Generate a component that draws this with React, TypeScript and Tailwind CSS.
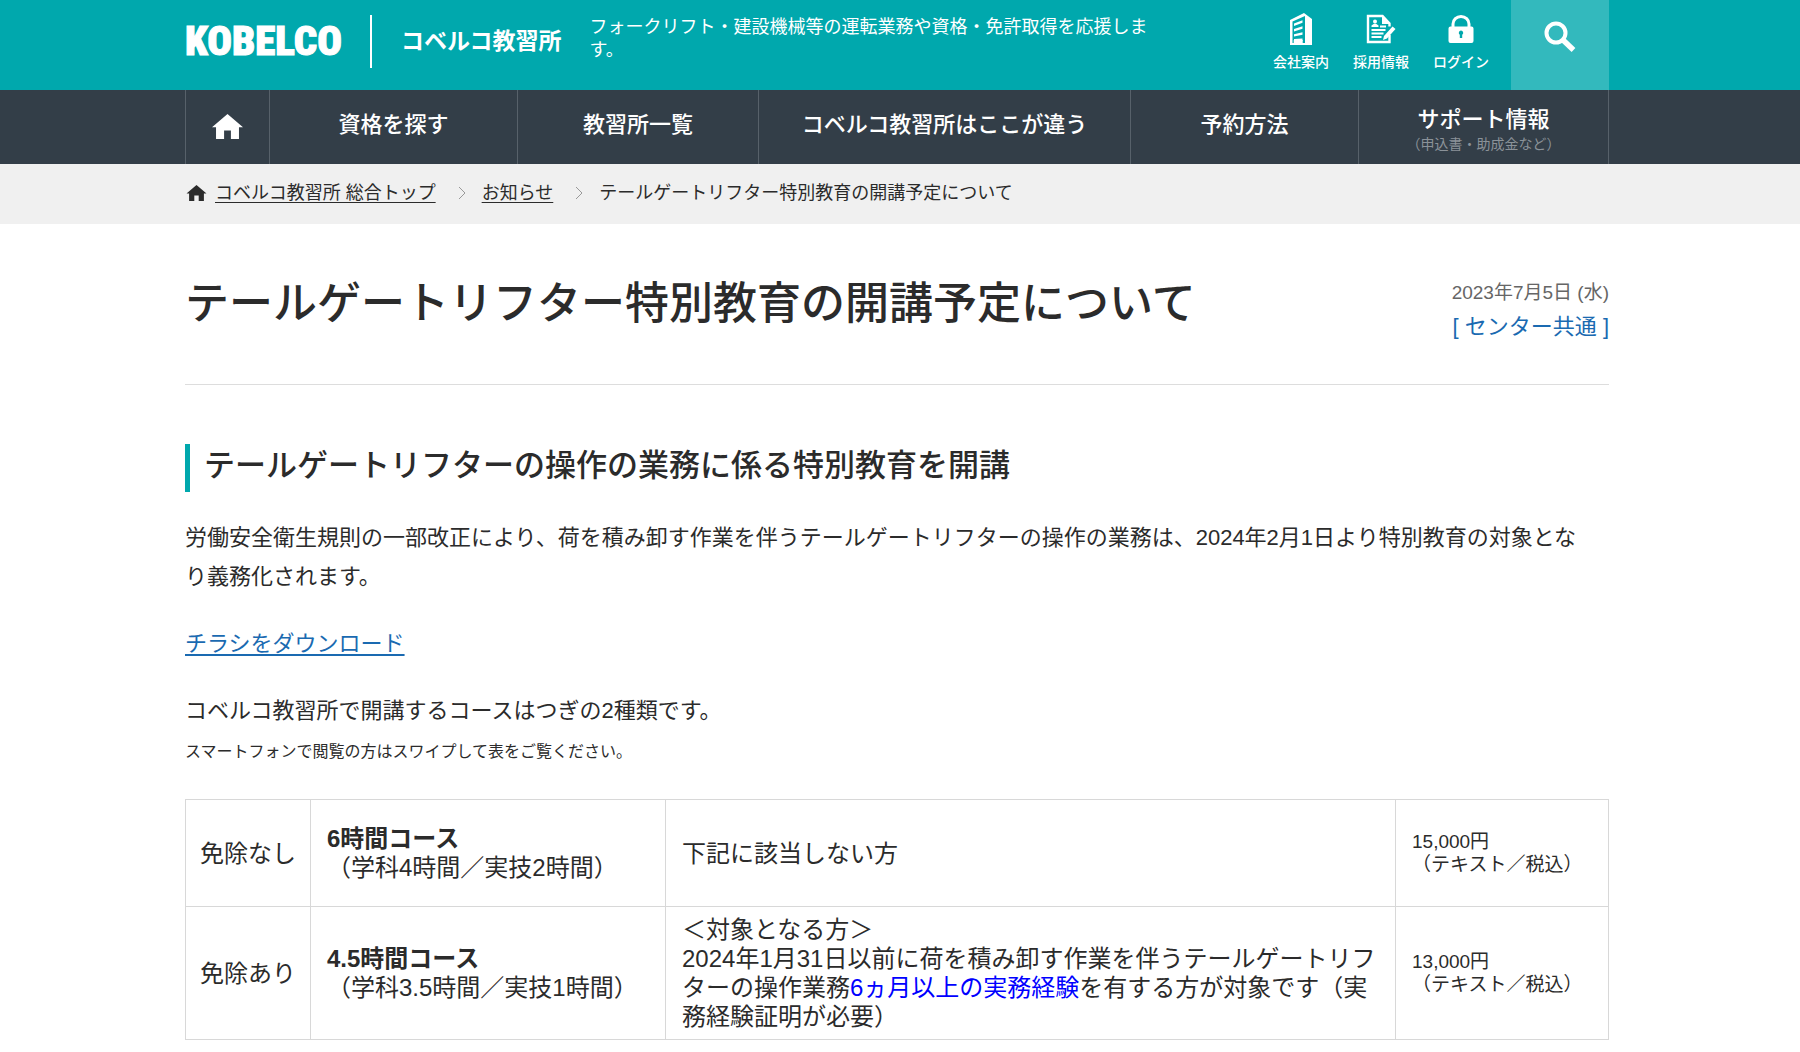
import type { ReactNode } from 'react';

interface INavItem {
  label: string;
  note?: string;
}

interface ICourse {
  exemption: string;
  name: string;
  hours: string;
  target: ReactNode;
  price: string;
}

const navItems: INavItem[] = [
  { label: '資格を探す' },
  { label: '教習所一覧' },
  { label: 'コベルコ教習所はここが違う' },
  { label: '予約方法' },
  { label: 'サポート情報', note: '（申込書・助成金など）' },
];

const courses: ICourse[] = [
  {
    exemption: '免除なし',
    name: '6時間コース',
    hours: '（学科4時間／実技2時間）',
    target: '下記に該当しない方',
    price: '15,000円',
  },
  {
    exemption: '免除あり',
    name: '4.5時間コース',
    hours: '（学科3.5時間／実技1時間）',
    target: (
      <>
        ＜対象となる方＞
        <br />
        2024年1月31日以前に荷を積み卸す作業を伴うテールゲートリフターの操作業務
        <span className="text-[#0000ff]">6ヵ月以上の実務経験</span>
        を有する方が対象です（実務経験証明が必要）
      </>
    ),
    price: '13,000円',
  },
];

function HomeIcon({ className }: { className: string }) {
  return (
    <svg viewBox="2 3 20 16" className={className} fill="currentColor" aria-hidden="true">
      <path d="M12 3l10 8.5h-2.600V19h-5.200v-5.400H9.800V19H4.600v-7.500H2z" />
    </svg>
  );
}

function BuildingIcon() {
  return (
    <svg viewBox="0 0 24 34" className="h-[34px] w-6" fill="currentColor" aria-hidden="true">
      <path fillRule="evenodd" d="M1 8L15 1l8 6v26H1zM3.5 9.600V31h1.200v-3h9v3H16V4z" />
      <path d="M5 11.600l8.500-3.400v2.600L5 14zM5 17l8.500-2.800v2.600L5 19.400zM5 22.200l8.500-2v2.600L5 24.600zM5 27l8.500-.6V29H5z" />
    </svg>
  );
}

function DocumentIcon() {
  return (
    <svg viewBox="0 0 30 30" className="h-[30px] w-[30px]" aria-hidden="true">
      <path
        d="M23.5 21v7H2V2h14.5l7 7.500v3"
        fill="none"
        stroke="currentColor"
        strokeWidth="2.400"
      />
      <path d="M16 2v8h8z" fill="currentColor" />
      <circle cx="9" cy="7.500" r="2" fill="currentColor" />
      <path d="M5.500 13v-1.500L8 9.800h2l2.500 1.700V13z" fill="currentColor" />
      <path
        d="M14 12.500h6M5.500 16h14M5.500 19.500h12M5.500 23h10"
        fill="none"
        stroke="currentColor"
        strokeWidth="1.800"
      />
      <path d="M26.500 12.500l3 2.500-8.500 9.500-4 1.500 1-4z" fill="currentColor" />
    </svg>
  );
}

function LockIcon() {
  return (
    <svg viewBox="0 0 26 28" className="h-7 w-[26px]" aria-hidden="true">
      <path
        d="M5 13V9a8 7.500 0 0 1 16 0v4"
        fill="none"
        stroke="currentColor"
        strokeWidth="3"
      />
      <path
        fill="currentColor"
        fillRule="evenodd"
        d="M2.500 11.500h21a2 2 0 0 1 2 2V26a2 2 0 0 1-2 2h-21a2 2 0 0 1-2-2V13.500a2 2 0 0 1 2-2zM13 15.500a2.300 2.300 0 0 0-1.200 4.200V23h2.400v-3.300A2.300 2.300 0 0 0 13 15.500z"
      />
    </svg>
  );
}

function SearchIcon() {
  return (
    <svg
      viewBox="0 0 32 32"
      className="size-8"
      fill="none"
      stroke="currentColor"
      aria-hidden="true"
    >
      <circle cx="12" cy="12" r="9.500" strokeWidth="4" />
      <path d="M19 19l10.500 10" strokeWidth="5.500" />
    </svg>
  );
}

function Chevron() {
  return (
    <svg
      viewBox="0 0 8 14"
      className="mr-4 ml-[22px] h-3.5 w-2"
      fill="none"
      stroke="#999999"
      aria-hidden="true"
    >
      <path d="M1 1l6 6-6 6" />
    </svg>
  );
}

function Header() {
  const links = [
    { label: '会社案内', icon: <BuildingIcon /> },
    { label: '採用情報', icon: <DocumentIcon /> },
    { label: 'ログイン', icon: <LockIcon /> },
  ];

  return (
    <header className="bg-[#00a8ad] pr-1.5 text-white">
      <div className="mx-auto flex h-[90px] max-w-[1424px] items-start">
        <a href="#" className="flex h-[82px] shrink-0 items-center">
          <span className="w-[185px] font-['Liberation_Sans_Narrow','Roboto_Condensed','Liberation_Sans',sans-serif] text-[41px] leading-none font-black [-webkit-text-stroke:1px_white]">
            KOBELCO
          </span>
          <span className="h-[53px] w-0.5 bg-white" />
          <span className="ml-[29px] text-[23px] leading-none font-bold">コベルコ教習所</span>
        </a>
        <p className="mt-4 ml-7 w-[571px] text-lg leading-[23px]">
          フォークリフト・建設機械等の運転業務や資格・免許取得を応援します。
        </p>
        <ul className="ml-auto flex gap-6 pt-3">
          {links.map((link) => (
            <li key={link.label}>
              <a href="#" className="flex flex-col items-center text-sm leading-5 font-medium">
                <span className="flex h-9 items-center pb-0.5">{link.icon}</span>
                <span className="pt-1">{link.label}</span>
              </a>
            </li>
          ))}
        </ul>
        <button
          aria-label="検索"
          className="ml-[22px] flex h-full w-[98px] justify-center bg-[#33b9bd] pt-[21px]"
        >
          <SearchIcon />
        </button>
      </div>
    </header>
  );
}

function Nav() {
  return (
    <nav className="bg-[#333e48] pr-1.5 text-white">
      <ul className="mx-auto grid h-[74px] max-w-[1424px] grid-cols-[84fr_248fr_241fr_372fr_228fr_250fr] border-l border-[#57616a]">
        <li className="border-r border-[#57616a]">
          <a
            href="#"
            aria-label="ホーム"
            className="flex h-full items-center justify-center pb-0.5"
          >
            <HomeIcon className="h-[25px] w-[31px]" />
          </a>
        </li>
        {navItems.map((item) => (
          <li key={item.label} className="border-r border-[#57616a]">
            <a
              href="#"
              className={`flex h-full flex-col items-center justify-center text-[22px] leading-7 font-medium ${
                item.note ? 'pt-1.5' : 'pb-1'
              }`}
            >
              {item.label}
              {item.note && (
                <span className="text-sm leading-5 font-normal text-[#8b9299]">{item.note}</span>
              )}
            </a>
          </li>
        ))}
      </ul>
    </nav>
  );
}

function Breadcrumb() {
  return (
    <div className="bg-[#f0f0f0] pr-1.5">
      <div className="mx-auto flex h-[60px] max-w-[1424px] items-center pb-0.5 text-lg leading-6">
        <HomeIcon className="mr-2 ml-px h-4 w-[21px]" />
        <a href="#" className="underline underline-offset-3">
          コベルコ教習所 総合トップ
        </a>
        <Chevron />
        <a href="#" className="underline underline-offset-3">
          お知らせ
        </a>
        <Chevron />
        <span>テールゲートリフター特別教育の開講予定について</span>
      </div>
    </div>
  );
}

function CourseTable() {
  return (
    <table className="mt-7 w-full table-fixed border-collapse text-2xl leading-[29px]">
      <colgroup>
        <col className="w-[125px]" />
        <col className="w-[355px]" />
        <col />
        <col className="w-[213px]" />
      </colgroup>
      <tbody>
        {courses.map((course) => (
          <tr key={course.name} className="h-[107px]">
            <td className="border border-[#d8d8d8] px-3.5 py-2">{course.exemption}</td>
            <td className="border border-[#d8d8d8] px-4 py-2">
              <strong>{course.name}</strong>
              <br />
              {course.hours}
            </td>
            <td className="border border-[#d8d8d8] px-4 py-2">{course.target}</td>
            <td className="border border-[#d8d8d8] px-4 py-2 text-[19px] leading-[23px]">
              {course.price}
              <br />
              （テキスト／税込）
            </td>
          </tr>
        ))}
      </tbody>
    </table>
  );
}

export default function App() {
  return (
    <div
      lang="ja"
      className="min-h-screen bg-white font-['Liberation_Sans','Noto_Sans_CJK_JP',sans-serif] text-[#2b2b2b]"
    >
      <Header />
      <Nav />
      <Breadcrumb />
      <main className="pr-1.5">
        <article className="mx-auto max-w-[1424px] text-[22px] leading-[39px]">
          <div className="flex justify-between border-b border-[#dddddd] pt-12 pb-10">
            <h1 className="text-[44px] leading-[64px] font-medium">
              テールゲートリフター特別教育の開講予定について
            </h1>
            <div className="pt-1 text-right leading-[34px]">
              <p className="text-[19px] text-[#666666]">2023年7月5日 (水)</p>
              <a href="#" className="text-[#1a6ab1]">
                [ センター共通 ]
              </a>
            </div>
          </div>

          <h2 className="mt-[59px] border-l-5 border-[#00a8ad] pb-1 pl-3.5 text-[31px] leading-[44px] font-medium">
            テールゲートリフターの操作の業務に係る特別教育を開講
          </h2>
          <p className="mt-[26px] pr-4">
            労働安全衛生規則の一部改正により、荷を積み卸す作業を伴うテールゲートリフターの操作の業務は、2024年2月1日より特別教育の対象となり義務化されます。
          </p>
          <p className="mt-7">
            <a href="#" className="text-[#1a6ab1] underline underline-offset-3">
              チラシをダウンロード
            </a>
          </p>
          <p className="mt-7">コベルコ教習所で開講するコースはつぎの2種類です。</p>
          <p className="mt-0.5 text-base leading-[39px]">
            スマートフォンで閲覧の方はスワイプして表をご覧ください。
          </p>
          <CourseTable />
        </article>
      </main>
    </div>
  );
}
